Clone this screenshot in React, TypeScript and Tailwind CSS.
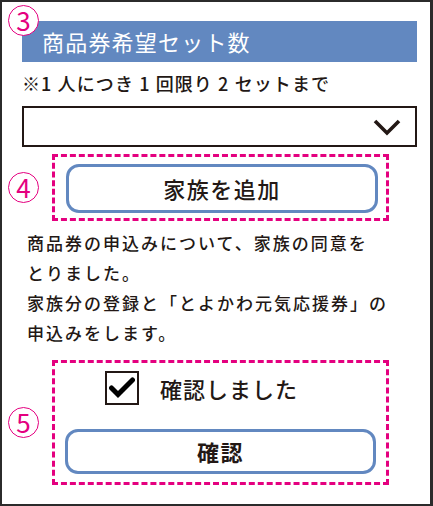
import React from "react";

const jp = "font-['Noto_Sans_CJK_JP',_'Noto_Sans',_sans-serif]";

function StepMark({ n }: { n: string }) {
  return (
    <span className="flex h-[31px] w-[31px] items-center justify-center rounded-full border-[1.5px] border-[#e4007f] bg-white text-[26px] leading-none text-[#e4007f]">
      <span className="-mt-[2px]">{n}</span>
    </span>
  );
}

function Chevron() {
  return (
    <svg width="28" height="18" viewBox="0 0 28 18" fill="none">
      <polyline points="2,3 14,15 26,3" stroke="#231815" strokeWidth="3.6" strokeLinejoin="miter" />
    </svg>
  );
}

function CheckBox() {
  return (
    <span className="flex h-[34px] w-[34px] items-center justify-center border-2 border-[#231815] bg-white">
      <svg width="26" height="22" viewBox="0 0 26 22" fill="none">
        <path d="M2.5 11 L9 17.5 L23.5 3" stroke="#000" strokeWidth="5" strokeLinecap="round" strokeLinejoin="miter" />
      </svg>
    </span>
  );
}

export default function App() {
  return (
    <div className={`${jp} relative h-[506px] w-[433px] border-2 border-r-[3px] border-[#2b2b2b] bg-white pt-[19px] text-[#231815]`}>
      <div className="absolute left-[6px] top-[3px]">
        <StepMark n="3" />
      </div>

      {/* section title */}
      <div className="ml-[20px] mr-[13px] flex h-[41px] items-center bg-[#6288c0] pl-[20px] text-[22px] tracking-[1.2px] text-white">
        商品券希望セット数
      </div>

      <p className="ml-[20px] mt-[9px] text-[18px] font-medium leading-[24px] tracking-[1.1px]">
        ※1 人につき 1 回限り 2 セットまで
      </p>

      {/* set count select */}
      <div className="ml-[20px] mr-[13px] mt-[11px] flex h-[41px] items-center justify-end border-2 border-[#231815] pr-[14px]">
        <Chevron />
      </div>

      {/* add family */}
      <div className="mt-[7px] flex items-center pl-[6px]">
        <StepMark n="4" />
        <div className="ml-[13px] h-[67px] w-[337px] border-[3px] border-dashed border-[#e4007f] pl-[11px] pt-[7px]">
          <button className="flex h-[49px] w-[312px] items-center justify-center rounded-[13px] border-[3px] border-[#6288c0] bg-white text-[22px] font-medium tracking-[1.5px] text-[#231815]">
            家族を追加
          </button>
        </div>
      </div>

      <div className="ml-[25px] mt-[7px] text-[17px] font-medium leading-[30px] tracking-[2px]">
        <p>商品券の申込みについて、家族の同意を</p>
        <p>とりました。</p>
        <p>家族分の登録と「とよかわ元気応援券」の</p>
        <p>申込みをします。</p>
      </div>

      {/* confirmation */}
      <div className="mt-[12px] flex items-center pl-[6px]">
        <StepMark n="5" />
        <div className="ml-[13px] h-[125px] w-[337px] border-[3px] border-dashed border-[#e4007f] pl-[10px] pt-[8px]">
          <label className="ml-[40px] flex items-center gap-[21px]">
            <CheckBox />
            <span className="text-[22px] font-medium tracking-[1px]">確認しました</span>
          </label>
          <button className="mt-[24px] flex h-[45px] w-[311px] items-center justify-center rounded-[13px] border-[3px] border-[#6288c0] bg-white text-[22px] font-bold tracking-[1.5px] text-[#231815]">
            確認
          </button>
        </div>
      </div>
    </div>
  );
}
